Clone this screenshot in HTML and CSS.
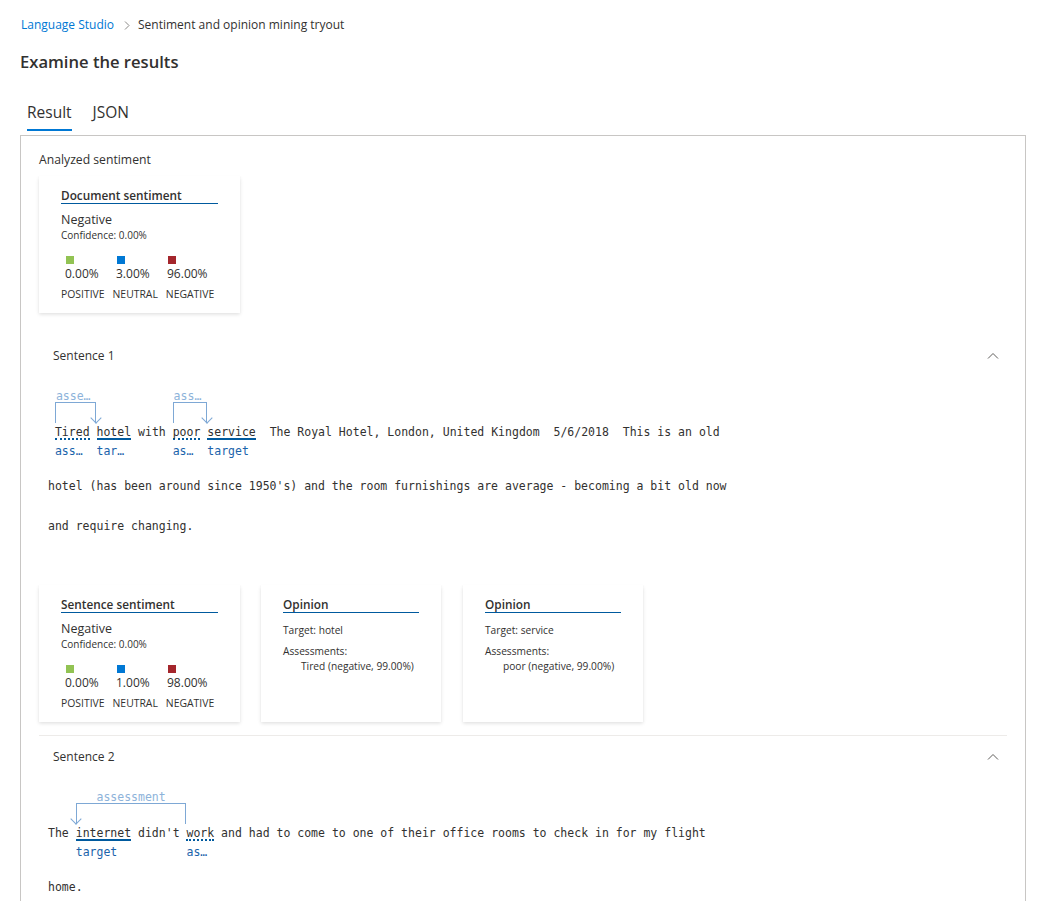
FILE: index.html
```html
<!DOCTYPE html>
<html lang="en">
<head>
<meta charset="utf-8">
<title>Sentiment and opinion mining tryout</title>
<link rel="stylesheet" href="styles.css">
</head>
<body>
<div class="page">
  <nav class="breadcrumb">
    <a class="crumb-link" href="#">Language Studio</a>
    <svg class="crumb-sep" width="6" height="9" viewBox="0 0 6 9"><polyline points="1,0.5 5,4.5 1,8.5" fill="none" stroke="#8a8886" stroke-width="1"/></svg>
    <span class="crumb-current">Sentiment and opinion mining tryout</span>
  </nav>
  <h1 class="title">Examine the results</h1>
  <div class="tabs">
    <span class="tab active">Result</span>
    <span class="tab">JSON</span>
  </div>

  <div class="panel">
    <div class="section-title">Analyzed sentiment</div>

    <div class="card doc-card">
      <div class="card-title">Document sentiment</div>
      <div class="sent-label">Negative</div>
      <div class="conf">Confidence: 0.00%</div>
      <div class="scores">
        <div class="score"><i class="sq pos"></i><span class="pct">0.00%</span></div>
        <div class="score"><i class="sq neu"></i><span class="pct">3.00%</span></div>
        <div class="score"><i class="sq neg"></i><span class="pct">96.00%</span></div>
      </div>
      <div class="score-labels"><span>POSITIVE</span><span>NEUTRAL</span><span>NEGATIVE</span></div>
    </div>

    <section class="sentence first">
      <div class="sentence-head">
        <span>Sentence 1</span>
        <svg class="chev" width="12" height="8" viewBox="0 0 12 8"><polyline points="1,6.5 6,1.5 11,6.5" fill="none" stroke="#605e5c" stroke-width="1"/></svg>
      </div>
      <div class="text">
        <div class="ann-line">
          <div class="arc arc-right" style="left:6.9px;width:41.5px">
            <span class="arc-label">assessment</span>
            <div class="arc-box"><i class="arrow"></i></div>
          </div>
          <div class="arc arc-right" style="left:124.6px;width:34.6px">
            <span class="arc-label">assessment</span>
            <div class="arc-box"><i class="arrow"></i></div>
          </div>
          <div class="tokens">
            <span class="plain"> </span>
            <span class="tok"><span class="w dotted">Tired</span><span class="lbl">assessment</span></span>
            <span class="plain"> </span>
            <span class="tok"><span class="w solid">hotel</span><span class="lbl">target</span></span>
            <span class="plain"> with </span>
            <span class="tok"><span class="w dotted">poor</span><span class="lbl">assessment</span></span>
            <span class="plain"> </span>
            <span class="tok"><span class="w solid">service</span><span class="lbl">target</span></span>
            <span class="plain">  The Royal Hotel, London, United Kingdom  5/6/2018  This is an old</span>
          </div>
        </div>
        <div class="plain-line">hotel (has been around since 1950's) and the room furnishings are average - becoming a bit old now</div>
        <div class="plain-line">and require changing.</div>
      </div>
      <div class="cards">
        <div class="card sent-card">
          <div class="card-title">Sentence sentiment</div>
          <div class="sent-label">Negative</div>
          <div class="conf">Confidence: 0.00%</div>
          <div class="scores">
            <div class="score"><i class="sq pos"></i><span class="pct">0.00%</span></div>
            <div class="score"><i class="sq neu"></i><span class="pct">1.00%</span></div>
            <div class="score"><i class="sq neg"></i><span class="pct">98.00%</span></div>
          </div>
          <div class="score-labels"><span>POSITIVE</span><span>NEUTRAL</span><span>NEGATIVE</span></div>
        </div>
        <div class="card op-card">
          <div class="card-title">Opinion</div>
          <div class="op-row">Target: hotel</div>
          <div class="op-row op-gap">Assessments:</div>
          <div class="op-item">Tired (negative, 99.00%)</div>
        </div>
        <div class="card op-card op-card-last">
          <div class="card-title">Opinion</div>
          <div class="op-row">Target: service</div>
          <div class="op-row op-gap">Assessments:</div>
          <div class="op-item">poor (negative, 99.00%)</div>
        </div>
      </div>
    </section>

    <section class="sentence">
      <div class="sentence-head">
        <span>Sentence 2</span>
        <svg class="chev" width="12" height="8" viewBox="0 0 12 8"><polyline points="1,6.5 6,1.5 11,6.5" fill="none" stroke="#605e5c" stroke-width="1"/></svg>
      </div>
      <div class="text">
        <div class="ann-line">
          <div class="arc arc-left" style="left:27.7px;width:110.8px">
            <span class="arc-label">assessment</span>
            <div class="arc-box"><i class="arrow"></i></div>
          </div>
          <div class="tokens">
            <span class="plain">The </span>
            <span class="tok"><span class="w solid">internet</span><span class="lbl">target</span></span>
            <span class="plain"> didn't </span>
            <span class="tok"><span class="w dotted">work</span><span class="lbl">assessment</span></span>
            <span class="plain"> and had to come to one of their office rooms to check in for my flight</span>
          </div>
        </div>
        <div class="plain-line">home.</div>
      </div>
    </section>
  </div>
</div>
</body>
</html>
```

FILE: styles.css
```css
* { box-sizing: border-box; }

html, body {
  margin: 0;
  padding: 0;
  background: #ffffff;
}

body {
  font-family: "Open Sans", "Noto Sans", sans-serif;
  color: #323130;
}

.page {
  padding: 17px 28px 0 20px;
}

.breadcrumb {
  display: flex;
  align-items: center;
  height: 16px;
  font-size: 12px;
  line-height: 16px;
  padding-left: 1px;
}

.crumb-link {
  color: #0078d4;
  text-decoration: none;
}

.crumb-sep {
  margin: 0 8px 0 10px;
}

.crumb-current {
  color: #323130;
}

.title {
  margin: 17px 0 0;
  font-size: 16.6px;
  line-height: 24px;
  font-weight: 600;
  color: #323130;
}

.tabs {
  display: flex;
  gap: 21px;
  margin-top: 28px;
  padding-left: 7px;
}

.tab {
  font-size: 15.5px;
  line-height: 20px;
  padding-bottom: 6.5px;
  border-bottom: 2px solid transparent;
  color: #323130;
}

.tab.active {
  border-bottom-color: #0078d4;
}

.panel {
  margin-top: 4.5px;
  border: 1px solid #c8c6c4;
  padding: 16px 18px 60px 18px;
}

.section-title {
  font-size: 12.2px;
  line-height: 16px;
}

.card {
  background: #ffffff;
  box-shadow: 0 1.6px 3.6px rgba(0, 0, 0, 0.13), 0 0.3px 0.9px rgba(0, 0, 0, 0.11);
  padding: 11px 22px 12px 22px;
}

.doc-card {
  width: 201px;
  margin-top: 8px;
}

.card-title {
  font-size: 11.8px;
  line-height: 16px;
  font-weight: 600;
  border-bottom: 1.5px solid #005a9e;
  color: #323130;
}

.sent-label {
  margin-top: 8px;
  font-size: 12.5px;
  line-height: 16px;
}

.conf {
  font-size: 10px;
  line-height: 14px;
}

.scores {
  display: flex;
  margin-top: 14px;
  padding-left: 4px;
}

.score {
  width: 51px;
  display: flex;
  flex-direction: column;
  align-items: flex-start;
}

.sq {
  display: block;
  width: 8px;
  height: 8px;
  margin-left: 1px;
}

.sq.pos { background: #92c353; }
.sq.neu { background: #0078d4; }
.sq.neg { background: #a4262c; }

.pct {
  margin-top: 1.5px;
  font-size: 12px;
  line-height: 16px;
}

.score-labels {
  display: flex;
  gap: 8px;
  margin-top: 5.5px;
  font-size: 10.4px;
  line-height: 14px;
}

.sentence {
  border-top: 1px solid #edebe9;
}

.sentence.first {
  margin-top: 21px;
  border-top-color: transparent;
}

.sentence-head {
  display: flex;
  justify-content: space-between;
  align-items: center;
  padding: 13px 8px 13px 14px;
  font-size: 12px;
  line-height: 16px;
}

.text {
  padding-left: 9px;
  font-family: "DejaVu Sans Mono", "Liberation Mono", monospace;
  font-size: 11.5px;
  color: #323130;
}

.ann-line {
  position: relative;
  margin-top: 13px;
  padding-top: 36px;
}

.tokens {
  display: flex;
  align-items: flex-start;
  white-space: pre;
  line-height: 12px;
}

.tok {
  display: flex;
  flex-direction: column;
}

.w {
  line-height: 12px;
  border-bottom: 2px solid #005a9e;
}

.w.dotted {
  border-bottom-style: dotted;
}

.lbl {
  width: 0;
  min-width: calc(100% - 4px);
  margin-top: 4px;
  line-height: 14px;
  color: #1b63ab;
  overflow: hidden;
  text-overflow: ellipsis;
  white-space: nowrap;
}

.arc {
  position: absolute;
  top: 0;
  display: flex;
  flex-direction: column;
}

.arc-label {
  display: block;
  width: calc(100% - 2px);
  margin: 0 auto;
  text-align: center;
  line-height: 12px;
  color: #8db3da;
  overflow: hidden;
  text-overflow: ellipsis;
  white-space: nowrap;
}

.arc-box {
  position: relative;
  height: 21px;
  border: 1.5px solid #7ea8d5;
  border-bottom: none;
}

.arrow {
  position: absolute;
  bottom: 1px;
  width: 8px;
  height: 8px;
  border-right: 1.5px solid #7ea8d5;
  border-bottom: 1.5px solid #7ea8d5;
  transform: rotate(45deg);
}

.arc-right .arrow {
  right: -4.75px;
}

.arc-left .arrow {
  left: -4.75px;
}

.plain-line {
  line-height: 16px;
  white-space: pre;
  margin-top: 24px;
}

.ann-line + .plain-line {
  margin-top: 20px;
}

.cards {
  display: flex;
  align-items: stretch;
  gap: 21px;
  margin-top: 51px;
  margin-bottom: 13px;
}

.sent-card {
  width: 201px;
}

.op-card {
  width: 180px;
}

.op-card-last {
  margin-left: 1px;
}

.op-row {
  margin-top: 10px;
  font-size: 10.2px;
  line-height: 14px;
}

.op-row.op-gap {
  margin-top: 7px;
}

.op-item {
  margin-top: 1px;
  padding-left: 18px;
  font-size: 10.2px;
  line-height: 14px;
}
```
